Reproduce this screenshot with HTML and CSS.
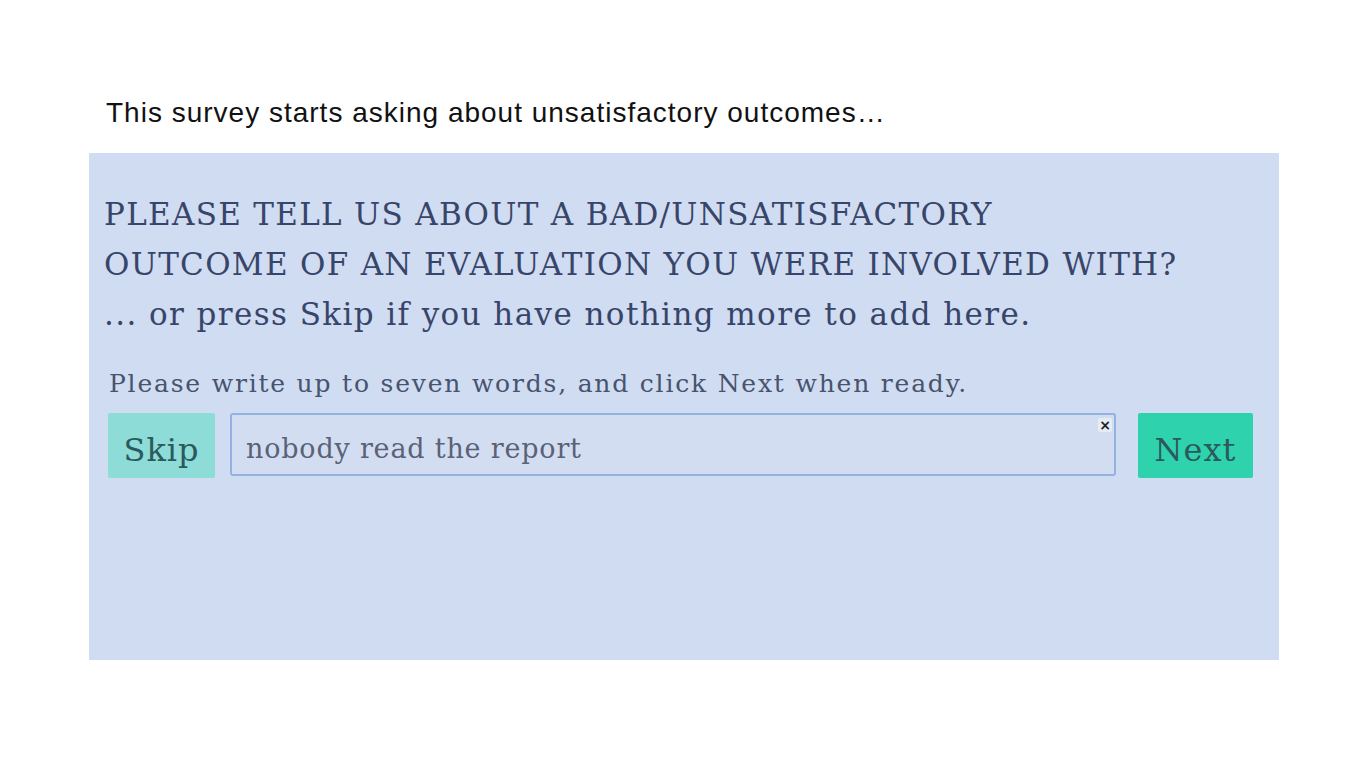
FILE: index.html
```html
<!DOCTYPE html>
<html lang="en">
<head>
  <meta charset="UTF-8">
  <title>Survey</title>
  <link rel="stylesheet" href="styles.css">
</head>
<body>
  <p class="intro">This survey starts asking about unsatisfactory outcomes…</p>
  <div class="panel">
    <h1 class="question">PLEASE TELL US ABOUT A BAD/UNSATISFACTORY<br>OUTCOME OF AN EVALUATION YOU WERE INVOLVED WITH?</h1>
    <p class="hint">... or press Skip if you have nothing more to add here.</p>
    <p class="instruct">Please write up to seven words, and click Next when ready.</p>
    <div class="answer-row">
      <button class="skip">Skip</button>
      <div class="field">
        <input type="text" value="nobody read the report">
        <span class="clear">×</span>
      </div>
      <button class="next">Next</button>
    </div>
  </div>
</body>
</html>
```

FILE: styles.css
```css
body {
  margin: 0;
  background: #fff;
  font-family: "DejaVu Serif", serif;
}
.intro {
  font-family: "Liberation Sans", Arial, sans-serif;
  font-size: 28px;
  letter-spacing: 1px;
  color: #111;
  margin: 0;
  padding: 95px 0 0 106px;
  line-height: 36px;
}
.panel {
  margin: 22px 0 0 89px;
  width: 1190px;
  height: 507px;
  box-sizing: border-box;
  background: #d0dcf1;
  padding: 36px 20px 0 15px;
  color: #38456a;
}
.question {
  font-weight: normal;
  font-size: 31px;
  letter-spacing: 1.3px;
  line-height: 50px;
  margin: 0;
}
.hint {
  font-size: 31px;
  letter-spacing: 1.4px;
  line-height: 50px;
  margin: 0;
}
.instruct {
  font-size: 25px;
  letter-spacing: 1.8px;
  margin: 28px 0 0 5px;
  line-height: 34px;
  color: #47536f;
}
.answer-row {
  display: flex;
  align-items: flex-start;
  margin: 12px 0 0 4px;
}
.answer-row button {
  font-family: "DejaVu Serif", serif;
  font-size: 32px;
  letter-spacing: 1px;
  border: none;
  border-radius: 2px;
  height: 65px;
  color: #2b5a5c;
  padding: 8px 10px 0;
}
.skip {
  background: #8ddcd8;
  width: 107px;
}
.next {
  background: #2ed3ae;
  width: 115px;
  margin-left: 22px;
}
.field {
  position: relative;
  margin-left: 15px;
  width: 886px;
}
.field input {
  box-sizing: border-box;
  width: 100%;
  height: 63px;
  border: 2px solid #93b2e2;
  border-radius: 3px;
  background: #d2ddf2;
  font-family: "DejaVu Serif", serif;
  font-size: 27px;
  letter-spacing: 0.8px;
  color: #5b6276;
  padding: 8px 14px 0;
}
.clear {
  position: absolute;
  top: 5px;
  right: 4px;
  width: 14px;
  height: 14px;
  background: #e6ecf6;
  border-radius: 2px;
  font-family: "DejaVu Sans", sans-serif;
  font-size: 14px;
  font-weight: bold;
  line-height: 14px;
  text-align: center;
  color: #222;
}
```
